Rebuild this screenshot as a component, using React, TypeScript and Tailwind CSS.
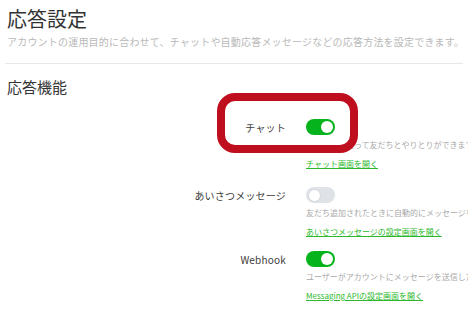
import React from "react";

function Toggle({ on }: { on: boolean }) {
  return on ? (
    <div className="relative z-20 flex h-[16px] w-[29px] items-center justify-end rounded-full bg-[#05b41c] px-[2px]">
      <div className="h-[12px] w-[12px] rounded-full bg-white" />
    </div>
  ) : (
    <div className="flex h-[16px] w-[29px] items-center justify-start rounded-full bg-[#dfe2e6] px-[1.5px]">
      <div className="h-[13px] w-[13px] rounded-full border border-[#d4d7db] bg-white" />
    </div>
  );
}

function Row({
  label,
  on,
  desc,
  link,
  top,
  raised,
}: {
  label: string;
  on: boolean;
  desc: string;
  link: string;
  top: string;
  raised?: boolean;
}) {
  return (
    <div className={`flex items-start ${top}`}>
      <div
        className={`flex h-[16px] w-[286px] shrink-0 items-center justify-end whitespace-nowrap text-[10px] tracking-[0.2px] text-[#3d3d3d] ${
          raised ? "relative z-20" : ""
        }`}
      >
        {label}
      </div>
      <div className="ml-[20px] flex shrink-0 flex-col items-start">
        <Toggle on={on} />
        <div className="mt-[4px] whitespace-nowrap text-[8px] leading-[12px] text-[#a9a9a9]">{desc}</div>
        <div className="mt-[7px] whitespace-nowrap text-[8px] leading-[12px] text-[#2cb82c] underline">
          {link}
        </div>
      </div>
    </div>
  );
}

export default function App() {
  return (
    <div
      className="relative h-[316px] w-[468px] overflow-hidden bg-white pt-[5px]"
      style={{ fontFamily: '"Noto Sans CJK JP", "Noto Sans", sans-serif' }}
    >
      <div className="px-[7px]">
        <div className="text-[20px] leading-[28px] text-[#333333]">応答設定</div>
        <div className="mt-[2px] whitespace-nowrap text-[10px] leading-[14px] tracking-[0.2px] text-[#b9b9b9]">
          アカウントの運用目的に合わせて、チャットや自動応答メッセージなどの応答方法を設定できます。
        </div>
      </div>
      <div className="mx-[5px] mt-[14px] h-px bg-[#e8e8e8]" />
      <div className="mt-[13px] px-[7px] text-[15px] leading-[20px] text-[#333333]">応答機能</div>

      <Row
        top="mt-[22px]"
        label="チャット"
        on={true}
        raised
        desc="チャットを使って友だちとやりとりができます。"
        link="チャット画面を開く"
      />
      <Row
        top="mt-[17px]"
        label="あいさつメッセージ"
        on={false}
        desc="友だち追加されたときに自動的にメッセージを送信します。"
        link="あいさつメッセージの設定画面を開く"
      />
      <Row
        top="mt-[13px]"
        label="Webhook"
        on={true}
        desc="ユーザーがアカウントにメッセージを送信したときにWebhook URLに通知します。"
        link="Messaging APIの設定画面を開く"
      />

      <div className="absolute left-[217px] top-[93px] z-10 h-[60px] w-[141px] rounded-[18px] border-[8px] border-[#bf0f1f] bg-white" />
    </div>
  );
}
